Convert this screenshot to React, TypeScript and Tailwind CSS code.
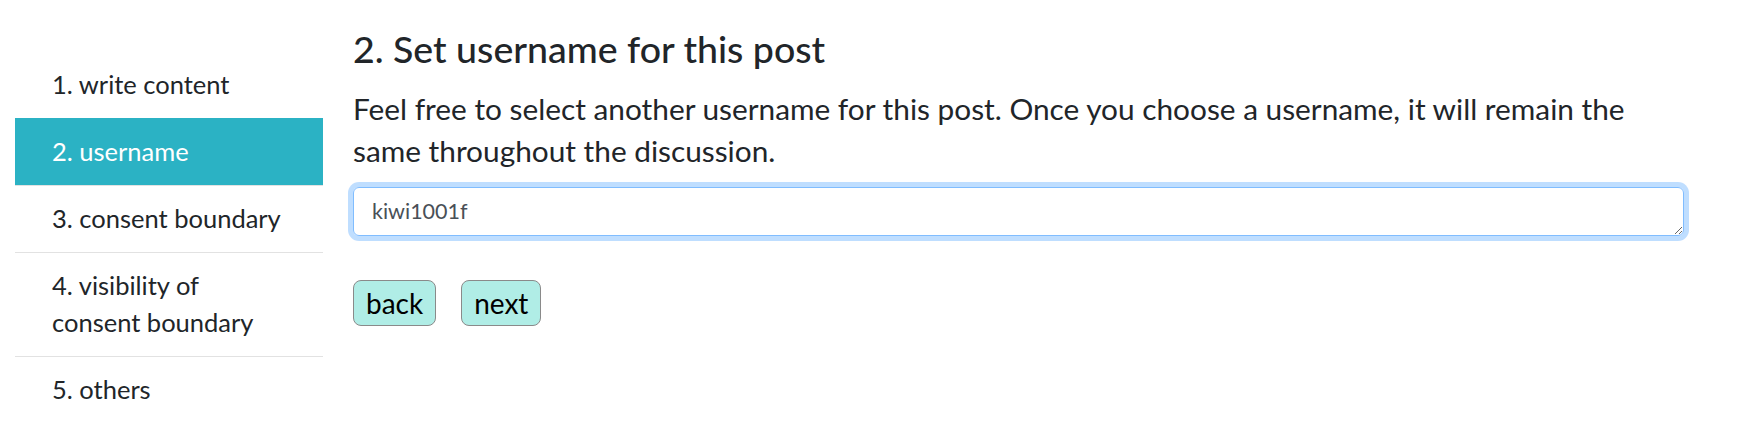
import React from "react";

const steps = [
  { label: "1. write content" },
  { label: "2. username", active: true },
  { label: "3. consent boundary" },
  { label: "4. visibility of", second: "consent boundary" },
  { label: "5. others" },
];

export default function App() {
  return (
    <div
      className="flex min-h-[430px] bg-white pl-[15px] text-[#212529]"
      style={{ fontFamily: "Lato, 'Open Sans', sans-serif" }}
    >
      {/* step navigation */}
      <nav className="mt-[51px] w-[308px] shrink-0">
        <ul>
          {steps.map((s, i) => (
            <li
              key={s.label}
              className={
                s.active
                  ? "bg-[#2bb2c4] py-[15px] pl-[37px] text-[25.5px] leading-[37px] text-white"
                  : i > 1
                  ? "border-t border-[#e2e2e2] pt-[14px] pb-[15px] pl-[37px] text-[25.5px] leading-[37px]"
                  : "py-[15px] pl-[37px] text-[25.5px] leading-[37px]"
              }
            >
              {s.label}
              {s.second && (
                <>
                  <br />
                  {s.second}
                </>
              )}
            </li>
          ))}
        </ul>
      </nav>

      {/* step body */}
      <main className="ml-[30px] w-[1331px] pt-[27px]">
        <h4 className="text-[37.5px] font-medium leading-[44px]">
          2. Set username for this post
        </h4>
        <p className="mt-[17px] max-w-[1315px] text-[29.8px] leading-[42px]">
          Feel free to select another username for this post. Once you choose a
          username, it will remain the same throughout the discussion.
        </p>
        <textarea
          rows={1}
          defaultValue="kiwi1001f"
          className="mt-[15px] block h-[49px] w-full resize-y rounded-[6px] border border-[#80bdff] px-[18px] py-[9px] text-[21.5px] leading-[29px] text-[#495057] shadow-[0_0_0_5px_rgba(0,123,255,0.25)] outline-none"
        />
        <div className="mt-[44px] flex gap-[25px]">
          <button className="h-[46px] rounded-[8px] border border-[#8a8a8a] bg-[#b0ede6] px-[12px] text-[28px] leading-[44px] text-black">
            back
          </button>
          <button className="h-[46px] rounded-[8px] border border-[#8a8a8a] bg-[#b0ede6] px-[12px] text-[28px] leading-[44px] text-black">
            next
          </button>
        </div>
      </main>
    </div>
  );
}
